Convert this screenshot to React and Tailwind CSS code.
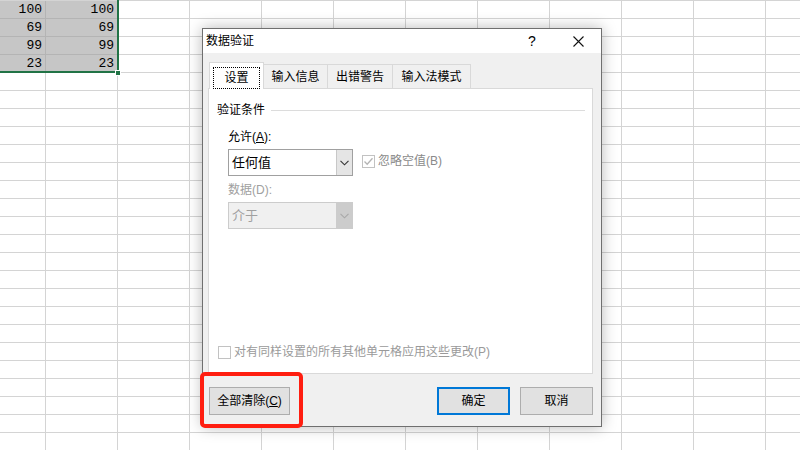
import React from "react";

const COLS = 12;
const ROWS = 25;

// values in the selected range A1:B4
const data = [
  ["100", "100"],
  ["69", "69"],
  ["99", "99"],
  ["23", "23"],
];

const Check = ({ checked }) => (
  <span className="w-[13px] h-[13px] border border-[#c2c2c2] bg-white flex items-center justify-center shrink-0">
    {checked && (
      <svg width="11" height="11" viewBox="0 0 11 11">
        <path d="M1.5 5.5 L4.2 8.3 L9.5 2.2" fill="none" stroke="#b4b4b4" strokeWidth="1.3" />
      </svg>
    )}
  </span>
);

const Chevron = ({ color }) => (
  <svg width="9" height="6" viewBox="0 0 9 6">
    <path d="M0.5 0.8 L4.5 4.8 L8.5 0.8" fill="none" stroke={color} strokeWidth="1.1" />
  </svg>
);

const Sheet = () => {
  const cells = [];
  for (let r = 0; r < ROWS; r++) {
    for (let c = 0; c < COLS; c++) {
      const selected = r < 4 && c < 2;
      cells.push(
        <div
          key={`${r}-${c}`}
          className={`h-[18px] border-r border-b flex items-center justify-end pr-[3px] text-[13px] ${
            selected ? "bg-[#c6c6c6] border-[#b4b4b4]" : "bg-white border-[#d4d4d4]"
          }`}
        >
          {selected ? data[r][c] : ""}
        </div>
      );
    }
  }
  return (
    <div
      className="grid grid-cols-[46px_repeat(11,72px)] border-t border-[#d4d4d4] w-[838px]"
      style={{ fontFamily: '"Liberation Mono", monospace' }}
    >
      {cells}
    </div>
  );
};

export default function App() {
  return (
    <div
      className="relative w-[800px] h-[450px] overflow-hidden bg-white text-black"
      style={{ fontFamily: '"Liberation Sans", "Noto Sans CJK SC", sans-serif' }}
    >
      <Sheet />

      {/* selection border + fill handle */}
      <div className="absolute left-0 top-0 w-[119px] h-[73px] border-r-2 border-b-2 border-[#217346]" />
      <div className="absolute left-[115px] top-[70px] w-[6px] h-[6px] bg-[#217346] border border-white" />

      {/* dialog */}
      <div className="absolute left-[202px] top-[28px] w-[400px] h-[399px] border border-[#6f6f6f] bg-[#f0f0f0] flex flex-col text-[12px] shadow-[0_0_14px_rgba(0,0,0,0.28)]">
        <div className="h-[24px] bg-white flex items-center shrink-0">
          <span className="pl-[3px] text-[12px]">数据验证</span>
          <div className="ml-auto flex h-full">
            <div className="w-[46px] flex items-center justify-center text-[14px]">?</div>
            <div className="w-[46px] flex items-center justify-center">
              <svg width="11" height="11" viewBox="0 0 11 11">
                <path d="M0.5 0.5 L10.5 10.5 M10.5 0.5 L0.5 10.5" stroke="#111" strokeWidth="1.1" />
              </svg>
            </div>
          </div>
        </div>

        <div className="flex-1 flex flex-col pl-[5px] pr-[8px] pt-[9px]">
          {/* tabs */}
          <div className="flex h-[26px] items-end relative z-10">
            <div className="ml-[1px] w-[55px] h-[27px] -mb-px bg-white border border-b-0 border-[#d9d9d9] flex items-start justify-center pt-[4px]">
              <span className="w-[47px] h-[22px] border border-dotted border-black flex items-center justify-center">设置</span>
            </div>
            {[
              ["输入信息", "w-[64px]"],
              ["出错警告", "w-[65px]"],
              ["输入法模式", "w-[78px]"],
            ].map(([t, w]) => (
              <div key={t} className={`${w} h-[24px] border border-l-0 border-b-0 border-[#d9d9d9] bg-[#f0f0f0] flex items-center justify-center`}>
                {t}
              </div>
            ))}
          </div>

          {/* panel */}
          <div className="h-[286px] bg-white border border-[#d9d9d9] flex flex-col">
            <div className="flex items-center pt-[13px] pl-[8px] pr-[7px] h-[29px]">
              <span className="leading-[16px]">验证条件</span>
              <div className="flex-1 h-px bg-[#dcdcdc] ml-[6px]" />
            </div>
            <div className="pl-[19px] flex flex-col">
              <div className="mt-[11px] leading-[16px]">
                允许(<span className="underline">A</span>):
              </div>
              <div className="mt-[4px] flex items-start">
                <div className="w-[125px] h-[27px] border border-[#a0a0a0] flex bg-white">
                  <span className="flex-1 flex items-center pl-[3px] text-[13px]">任何值</span>
                  <span className="w-[16px] bg-[#e5e5e5] border-l border-[#c8c8c8] flex items-center justify-center">
                    <Chevron color="#333" />
                  </span>
                </div>
                <div className="ml-[9px] mt-[3px] flex items-center gap-[3px] text-[#8a8a8a]">
                  <Check checked />
                  <span>忽略空值(B)</span>
                </div>
              </div>
              <div className="mt-[6px] leading-[16px] text-[#a0a0a0]">数据(D):</div>
              <div className="mt-[4px] w-[125px] h-[27px] border border-[#cccccc] flex bg-[#f0f0f0] text-[#a0a0a0]">
                <span className="flex-1 flex items-center pl-[3px] text-[13px]">介于</span>
                <span className="w-[16px] bg-[#cccccc] flex items-center justify-center">
                  <Chevron color="#a8a8a8" />
                </span>
              </div>
            </div>
            <div className="mt-auto pb-[12px] pl-[9px] flex items-center gap-[3px] text-[#9a9a9a]">
              <Check />
              <span>对有同样设置的所有其他单元格应用这些更改(P)</span>
            </div>
          </div>

          {/* buttons */}
          <div className="mt-[13px] flex">
            <button className="ml-[1px] w-[81px] h-[28px] bg-[#e1e1e1] border border-[#adadad] text-[12px]">
              全部清除(<span className="underline">C</span>)
            </button>
            <button className="ml-auto w-[73px] h-[28px] bg-[#e1e1e1] border-2 border-[#0078d7] text-[12px]">确定</button>
            <button className="ml-[10px] w-[73px] h-[28px] bg-[#e1e1e1] border border-[#adadad] text-[12px]">取消</button>
          </div>
        </div>
      </div>

      {/* red highlight */}
      <div className="absolute left-[200px] top-[372px] w-[103px] h-[56px] border-4 border-[#ff1e10] rounded-[5px]" />
    </div>
  );
}
